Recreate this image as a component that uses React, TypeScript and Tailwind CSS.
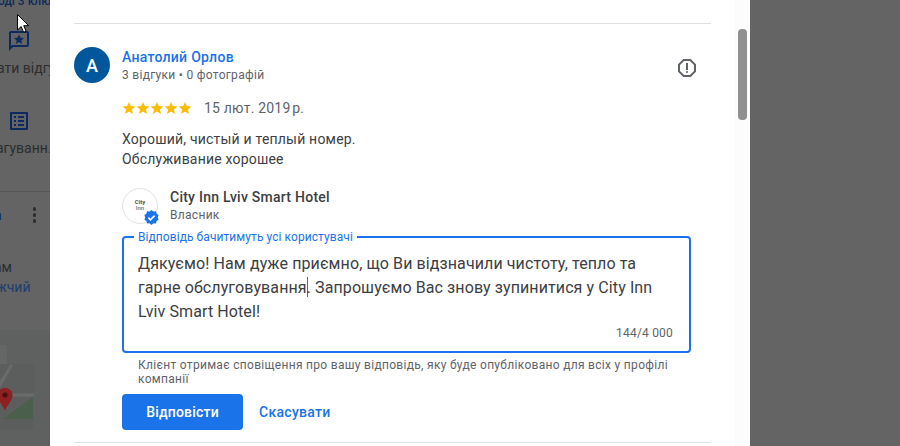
const font = { fontFamily: "Roboto, 'Noto Sans', sans-serif" };

function Star() {
  return (
    <svg viewBox="0 0 24 24" className="h-[14px] w-[14px] shrink-0 fill-[#fbbc04]">
      <path d="M12 1.5l3.1 7.2 7.9.7-6 5.2 1.8 7.7L12 18.2l-6.8 4.1L7 14.6 1 9.4l7.900-.7z" />
    </svg>
  );
}

function LeftStrip() {
  return (
    <div className="h-full w-[50px] shrink-0 overflow-hidden bg-[#646464] text-[14px] text-[#2b2d2e]">
      <div className="-ml-[2px] h-[6px] text-[12px] leading-[2px] font-medium whitespace-nowrap text-[#0e2a5c]">оді 3 клю</div>
      <svg viewBox="0 0 24 24" className="mt-[23px] ml-[7px] h-6 w-6 fill-[#0c2a60]">
        <path d="M20 2H4c-1.100 0-2 .9-2 2v18l4-4h14c1.100 0 2-.9 2-2V4c0-1.100-.9-2-2-2zm0 14H5.170L4 17.170V4h16v12z" />
        <path d="M12 5.500l1.500 3.300 3.500.3-2.700 2.300.9 3.500-3.200-1.900-3.200 1.900.9-3.500L7 9.100l3.500-.3z" />
      </svg>
      <div className="-ml-[3px] h-5 pt-[5px] leading-5 whitespace-nowrap">ати відгук</div>
      <svg viewBox="0 0 24 24" className="mt-[36px] ml-[7px] h-6 w-6 fill-[#0c2a60]">
        <path d="M19 5v14H5V5h14m1.100-2H3.900c-.5 0-.9.4-.9.9v16.200c0 .4.4.9.9.9h16.200c.4 0 .9-.5.9-.9V3.900c0-.5-.5-.9-.9-.9zM11 7h6v2h-6V7zm0 4h6v2h-6v-2zm0 4h6v2h-6zM7 7h2v2H7zm0 4h2v2H7zm0 4h2v2H7z" />
      </svg>
      <div className="-ml-[4px] h-5 pt-[5px] leading-5 whitespace-nowrap">агуванн...</div>
      <div className="mt-[38px] h-px bg-[#565656]" />
      <div className="flex h-[46px] items-center justify-between pr-[14px]">
        <span className="-ml-[6px] text-[14px] font-medium text-[#0c2a60]">а</span>
        <div className="flex flex-col gap-[2.5px]">
          <span className="h-[3.5px] w-[3.5px] rounded-full bg-[#2b2d2e]" />
          <span className="h-[3.5px] w-[3.5px] rounded-full bg-[#2b2d2e]" />
          <span className="h-[3.5px] w-[3.5px] rounded-full bg-[#2b2d2e]" />
        </div>
      </div>
      <div className="mt-[19px] -ml-[6px] leading-5 whitespace-nowrap">ам</div>
      <div className="-ml-[4px] leading-5 whitespace-nowrap text-[#1e3d70]">жчий</div>
      <div className="mt-[33px] h-[116px] bg-[#5f6160] pt-[15px]">
        <div className="h-[19px] w-[7px] rounded-r-[2px] bg-[#656766]" />
        <svg viewBox="0 0 34 66" className="h-[66px] w-[34px]">
          <rect width="34" height="66" rx="2" fill="#5c5e5d" />
          <path d="M0 17 L10 1 L13 1 L0 24z" fill="#6a6c6b" />
          <path d="M0 31H34" stroke="#6a6c6b" strokeWidth="3" />
          <path d="M3 55L33 33V55z" fill="#4a5f4c" />
          <path d="M5 24c-5.500 0-7.500 4-7.500 7.500 0 5 5 9 7.500 15 2.500-6 7.500-10 7.500-15C12.500 28 10.500 24 5 24z" fill="#8d2020" />
          <circle cx="5" cy="31" r="2.500" fill="#4c0f0f" />
        </svg>
      </div>
    </div>
  );
}

export default function App() {
  return (
    <div className="relative flex h-[446px] w-[900px] overflow-hidden bg-[#646464]" style={font}>
      <LeftStrip />

      <div className="flex h-full w-[700px] shrink-0 bg-white">
        <div className="flex-1 overflow-hidden pr-6 pl-6">
          <div className="mt-[23px] h-px bg-[#e0e0e0]" />

          <div className="mt-[23px] flex items-start">
            <div className="flex h-9 w-9 shrink-0 items-center justify-center rounded-full bg-[#01579b] text-[18px] font-medium text-white">А</div>
            <div className="ml-3 flex-1">
              <div className="text-[14px] leading-5 font-medium tracking-[0.28px] text-[#1a73e8]">Анатолий Орлов</div>
              <div className="text-[12px] leading-4 tracking-[0.3px] text-[#5f6368]">3 відгуки • 0 фотографій</div>
            </div>
            <svg viewBox="0 0 24 24" className="mt-[9px] mr-3 h-6 w-6 fill-[#5f6368]">
              <path d="M15.730 3H8.270L3 8.270v7.460L8.270 21h7.460L21 15.730V8.270L15.730 3zM19 14.900L14.900 19H9.100L5 14.900V9.100L9.100 5h5.800L19 9.100v5.800z" />
              <rect x="11" y="7" width="2" height="7" />
              <circle cx="12" cy="16" r="1" />
            </svg>
          </div>

          <div className="pl-12">
            <div className="mt-[15px] flex h-5 items-center">
              <div className="flex">
                <Star />
                <Star />
                <Star />
                <Star />
                <Star />
              </div>
              <span className="mt-[1px] ml-[12px] text-[14px] tracking-[0.2px] text-[#5f6368]">15 лют. 2019{"\u202F"}р.</span>
            </div>
            <p className="mt-[11px] text-[14px] leading-5 tracking-[0.2px] text-[#3c4043]">
              Хороший, чистый и теплый номер.
              <br />
              Обслуживание хорошее
            </p>

            <div className="mt-[19px] flex">
              <div className="relative flex h-9 w-9 shrink-0 flex-col items-center justify-center rounded-full border border-[#e3e3e3] bg-white pb-[3px]">
                <span className="text-[6px] leading-[6px] font-bold text-[#55534a]">City</span>
                <span className="text-[6px] leading-[6px] font-bold text-[#8b8b80]">Inn</span>
                <svg viewBox="0 0 24 24" className="absolute -right-[2px] -bottom-[2px] h-[15px] w-[15px]">
                  <path d="M12 0l3.200 2.300 3.900-.2 1.100 3.800 3.200 2.200-1.400 3.700 1.400 3.700-3.200 2.200-1.100 3.800-3.900-.2L12 24l-3.200-2.700-3.900.2-1.100-3.800L.6 15.500 2 11.800.6 8.100l3.200-2.200 1.100-3.800 3.900.2z" fill="#1a73e8" />
                  <path d="M7 12.300l3.300 3.300L17 9" fill="none" stroke="#fff" strokeWidth="2.600" />
                </svg>
              </div>
              <div className="ml-3 flex-1">
                <div className="text-[14px] leading-[18px] font-medium tracking-[0.25px] text-[#3c4043]">City Inn Lviv Smart Hotel</div>
                <div className="mt-[1px] text-[12px] leading-4 tracking-[0.3px] text-[#5f6368]">Власник</div>
              </div>
            </div>

            <fieldset className="mt-[6px] h-[123px] w-[569px] rounded-[4px] border-2 border-[#1a73e8] px-[14px]">
              <legend className="-ml-1 px-1 text-[12px] leading-[14px] tracking-[0.07px] whitespace-nowrap text-[#1a73e8]">Відповідь бачитимуть усі користувачі</legend>
              <p className="mt-[8px] text-[16px] leading-6 tracking-[0.1px] text-[#3c4043]">
                Дякуємо! Нам дуже приємно, що Ви відзначили чистоту, тепло та гарне обслуговування
                <span className="-mr-px inline-block h-[20px] w-px bg-[#1a73e8] align-[-4px]" />
                . Запрошуємо Вас знову зупинитися у City Inn Lviv Smart Hotel!
              </p>
              <div className="mt-[1px] pr-[2px] text-right text-[12px] leading-4 tracking-[0.2px] text-[#5f6368]">144/4 000</div>
            </fieldset>

            <p className="mt-[5px] w-[560px] pl-4 text-[12px] leading-[14px] tracking-[0.3px] text-[#5f6368]">
              Клієнт отримає сповіщення про вашу відповідь, яку буде опубліковано для всіх у профілі компанії
            </p>

            <div className="mt-[8px] flex items-center">
              <button className="h-9 w-[121px] rounded-[4px] bg-[#1a73e8] text-[14px] font-medium tracking-[0.2px] text-white">Відповісти</button>
              <button className="ml-4 text-[14px] font-medium tracking-[0.3px] text-[#1a73e8]">Скасувати</button>
            </div>
          </div>

          <div className="mt-3 h-px bg-[#e0e0e0]" />
        </div>

        <div className="h-full w-[15px] shrink-0 bg-[#fcfcfc] pt-[29px] pl-[3px]">
          <div className="h-[91px] w-[9px] rounded-[4px] bg-[#909090]" />
        </div>
      </div>

      <svg viewBox="0 0 12 19" className="absolute top-[14px] left-[17px] h-[19px] w-[12px]">
        <path d="M.5.5v15.500l3.700-3.400 2.400 5.600 2.500-1-2.400-5.500h5z" fill="#fff" stroke="#000" strokeWidth="1" />
      </svg>
    </div>
  );
}
